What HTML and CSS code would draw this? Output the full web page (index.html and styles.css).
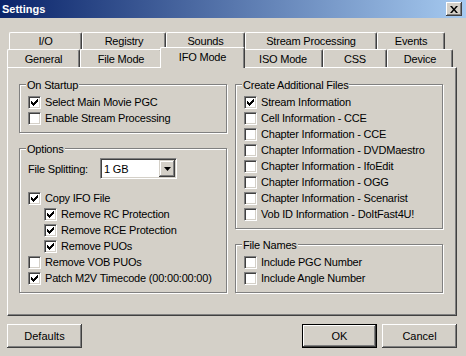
FILE: index.html
```html
<!DOCTYPE html>
<html lang="en">
<head>
    <meta charset="UTF-8">
    <title>Settings</title>
    <link rel="stylesheet" href="styles.css">
</head>
<body>
    <div class="titlebar">
        <span class="title">Settings</span>
        <span class="close">
            <svg width="8" height="7" viewBox="0 0 8 7"><path d="M0 0h2l2 2.4 2-2.4h2l-3 3.5 3 3.5h-2l-2-2.4-2 2.4h-2l3-3.5z" fill="#000"/></svg>
        </span>
    </div>

    <div class="content">
        <!-- Tab strip (two rows) -->
        <div class="tabs">
            <div class="tab-row back">
                <div class="tab tab-io">I/O</div>
                <div class="tab tab-registry">Registry</div>
                <div class="tab tab-sounds">Sounds</div>
                <div class="tab tab-stream">Stream Processing</div>
                <div class="tab tab-events">Events</div>
            </div>
            <div class="tab-row front">
                <div class="tab tab-general">General</div>
                <div class="tab tab-file">File Mode</div>
                <div class="tab tab-ifo active">IFO Mode</div>
                <div class="tab tab-iso">ISO Mode</div>
                <div class="tab tab-css">CSS</div>
                <div class="tab tab-device">Device</div>
            </div>
        </div>

        <div class="panel">
            <div class="col">
                <div class="group">
                    <div class="group-title">On Startup</div>
                    <div class="check"><span class="box checked"></span>Select Main Movie PGC</div>
                    <div class="check"><span class="box"></span>Enable Stream Processing</div>
                </div>

                <div class="group">
                    <div class="group-title">Options</div>
                    <div class="combo-row">
                        <span class="combo-label">File Splitting:</span>
                        <div class="combo">
                            <span class="combo-value">1 GB</span>
                            <span class="combo-btn">
                                <svg width="7" height="4" viewBox="0 0 7 4"><path d="M0 0h7l-3.5 4z" fill="#000"/></svg>
                            </span>
                        </div>
                    </div>
                    <div class="check"><span class="box checked"></span>Copy IFO File</div>
                    <div class="check indent"><span class="box checked"></span>Remove RC Protection</div>
                    <div class="check indent"><span class="box checked"></span>Remove RCE Protection</div>
                    <div class="check indent"><span class="box checked"></span>Remove PUOs</div>
                    <div class="check"><span class="box"></span>Remove VOB PUOs</div>
                    <div class="check"><span class="box checked"></span>Patch M2V Timecode (00:00:00:00)</div>
                </div>
            </div>

            <div class="col">
                <div class="group">
                    <div class="group-title">Create Additional Files</div>
                    <div class="check"><span class="box checked"></span>Stream Information</div>
                    <div class="check"><span class="box"></span>Cell Information - CCE</div>
                    <div class="check"><span class="box"></span>Chapter Information - CCE</div>
                    <div class="check"><span class="box"></span>Chapter Information - DVDMaestro</div>
                    <div class="check"><span class="box"></span>Chapter Information - IfoEdit</div>
                    <div class="check"><span class="box"></span>Chapter Information - OGG</div>
                    <div class="check"><span class="box"></span>Chapter Information - Scenarist</div>
                    <div class="check"><span class="box"></span>Vob ID Information - DoItFast4U!</div>
                </div>

                <div class="group">
                    <div class="group-title">File Names</div>
                    <div class="check"><span class="box"></span>Include PGC Number</div>
                    <div class="check"><span class="box"></span>Include Angle Number</div>
                </div>
            </div>
        </div>

        <div class="actions">
            <button class="btn">Defaults</button>
            <span class="spacer"></span>
            <button class="btn default">OK</button>
            <button class="btn">Cancel</button>
        </div>
    </div>

    <script>
        // Draw the classic check mark in every checked box
        const checkSvg = '<svg width="11" height="11" viewBox="0 0 11 11" shape-rendering="crispEdges">' +
            '<path fill="#000" d="M8 2h1v1h-1z M7 3h2v1h-2z M2 4h1v1h-1z M6 4h3v1h-3z M2 5h2v1h-2z M5 5h3v1h-3z M2 6h5v1h-5z M3 7h3v1h-3z M4 8h1v1h-1z"/></svg>';
        document.querySelectorAll('.box.checked').forEach(box => {
            box.innerHTML = checkSvg;
        });
    </script>
</body>
</html>
```

FILE: styles.css
```css
/* Classic Windows dialog */
:root {
    --face: #d4d0c8;
    --shadow: #808080;
    --dark: #404040;
    --light: #fff;
}

body {
    margin: 0;
    width: 466px;
    height: 356px;
    overflow: hidden;
    background: var(--face);
    font-family: "Liberation Sans", Arial, sans-serif;
    font-size: 11px;
    letter-spacing: -0.2px;
    color: #000;
}

/* Title bar */
.titlebar {
    height: 18px;
    display: flex;
    align-items: center;
    justify-content: space-between;
    padding: 0 4px 0 2px;
    background: linear-gradient(to right, #0a246a, #a6caf0);
    color: #fff;
}

.title {
    font-weight: bold;
    letter-spacing: 0;
}

.close {
    width: 16px;
    height: 14px;
    box-sizing: border-box;
    display: flex;
    align-items: center;
    justify-content: center;
    background: var(--face);
    box-shadow: inset -1px -1px var(--dark), inset 1px 1px var(--light),
                inset -2px -2px var(--shadow);
}

.close svg {
    display: block;
}

.content {
    padding: 14px 9px 0 7px;
}

/* Tabs */
.tab-row {
    display: flex;
    align-items: flex-start;
    height: 17px;
}

.tab-row.back {
    margin-left: 2px;
}

.tab-row.front {
    height: 18px;
}

.tab {
    box-sizing: border-box;
    height: 100%;
    display: flex;
    align-items: center;
    justify-content: center;
    border-top: 1px solid var(--light);
    border-left: 1px solid var(--light);
    border-right: 1px solid var(--dark);
    border-radius: 2px 2px 0 0;
    box-shadow: inset -1px 0 var(--shadow);
    background: var(--face);
    white-space: nowrap;
}

.tab.active {
    position: relative;
    z-index: 1;
    height: 21px;
    margin: -2px -2px 0;
    padding-bottom: 3px;
}

.tab-io { width: 73px; }
.tab-registry { width: 84px; }
.tab-sounds { width: 79px; }
.tab-stream { width: 132px; }
.tab-events { width: 68px; }

.tab-general { width: 73px; }
.tab-file { width: 82px; }
.tab-ifo { width: 85px; }
.tab-iso { width: 80px; }
.tab-css { width: 64px; }
.tab-device { width: 66px; }

/* Tab page */
.panel {
    box-sizing: border-box;
    width: 450px;
    height: 249px;
    border-top: 1px solid var(--light);
    border-left: 1px solid var(--light);
    border-right: 1px solid var(--dark);
    border-bottom: 1px solid var(--dark);
    box-shadow: inset -1px -1px var(--shadow);
    padding: 16px 0 0 11px;
    display: grid;
    grid-template-columns: 208px 208px;
    column-gap: 8px;
    align-content: start;
}

.col {
    display: flex;
    flex-direction: column;
    gap: 15px;
}

/* Group boxes */
.group {
    border: 1px solid var(--shadow);
    box-shadow: inset 1px 1px var(--light), 1px 1px var(--light);
    padding: 0 0 6px 8px;
}

.group-title {
    width: max-content;
    margin: -7px 0 2px -2px;
    padding: 0 1px;
    line-height: 14px;
    background: var(--face);
}

/* Check boxes */
.check {
    display: flex;
    align-items: center;
    gap: 4px;
    height: 16px;
    white-space: nowrap;
}

.check.indent {
    padding-left: 16px;
}

.box {
    flex: none;
    width: 13px;
    height: 13px;
    box-sizing: border-box;
    background: #fff;
    border-top: 1px solid var(--shadow);
    border-left: 1px solid var(--shadow);
    border-right: 1px solid var(--light);
    border-bottom: 1px solid var(--light);
    box-shadow: inset 1px 1px var(--dark), inset -1px -1px var(--face);
}

.box svg {
    display: block;
}

/* Combo box */
.combo-row {
    display: flex;
    align-items: center;
    height: 21px;
    margin-bottom: 11px;
}

.combo-label {
    width: 72px;
}

.combo {
    width: 77px;
    height: 21px;
    box-sizing: border-box;
    display: flex;
    align-items: center;
    padding: 1px;
    background: #fff;
    border-top: 1px solid var(--shadow);
    border-left: 1px solid var(--shadow);
    border-right: 1px solid var(--light);
    border-bottom: 1px solid var(--light);
    box-shadow: inset 1px 1px var(--dark), inset -1px -1px var(--face);
}

.combo-value {
    flex: 1;
    padding-left: 2px;
}

.combo-btn {
    width: 16px;
    height: 17px;
    box-sizing: border-box;
    display: flex;
    align-items: center;
    justify-content: center;
    background: var(--face);
    box-shadow: inset -1px -1px var(--dark), inset 1px 1px var(--face),
                inset -2px -2px var(--shadow), inset 2px 2px var(--light);
}

.combo-btn svg {
    display: block;
}

/* Dialog buttons */
.actions {
    display: flex;
    gap: 5px;
    margin-top: 8px;
}

.spacer {
    flex: 1;
}

.btn {
    width: 75px;
    height: 24px;
    box-sizing: border-box;
    padding: 0;
    border: 0;
    background: var(--face);
    font: inherit;
    color: #000;
    box-shadow: inset -1px -1px var(--dark), inset 1px 1px var(--light),
                inset -2px -2px var(--shadow), inset 2px 2px var(--face);
}

.btn.default {
    border: 1px solid #000;
}
```
